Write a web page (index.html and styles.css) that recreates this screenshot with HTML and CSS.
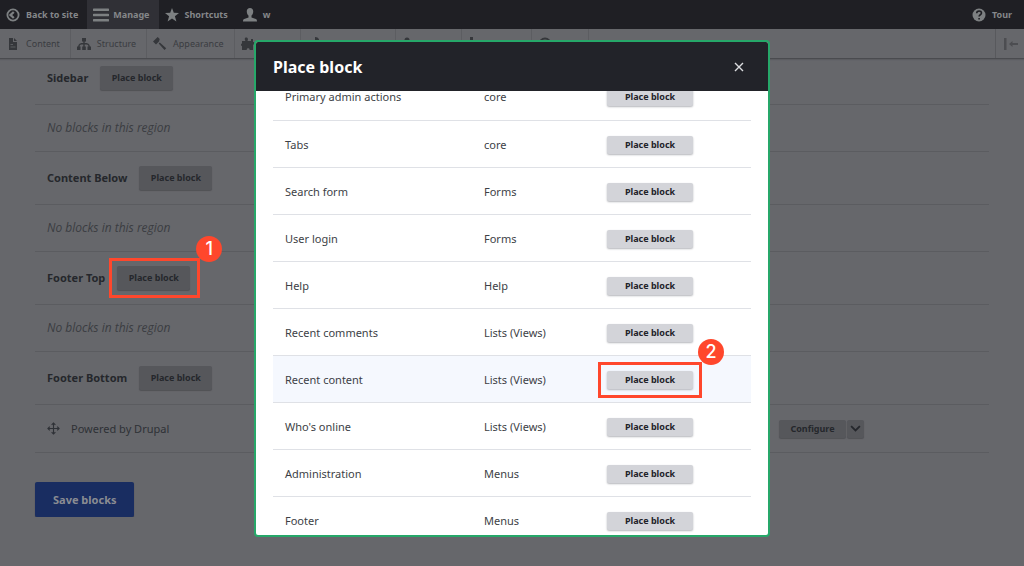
FILE: index.html
```html
<!DOCTYPE html>
<html lang="en">
<head>
<meta charset="utf-8">
<meta name="viewport" content="width=device-width, initial-scale=1">
<title>Place block</title>
<link rel="stylesheet" href="styles.css">
</head>
<body>
<nav class="bar" aria-label="Toolbar">
  <a class="bar-item" href="#"><svg viewBox="0 0 14 14"><circle cx="7" cy="7" r="5.6" fill="none" stroke="currentColor" stroke-width="1.8"/><path d="M2.8 7 7 3.2 8.6 4.7 6.2 7l2.4 2.3L7 10.8z" fill="currentColor"/></svg>Back to site</a>
  <a class="bar-item bar-item-active" href="#"><svg class="wide" viewBox="0 0 16 14"><path d="M1 1.7h14M1 7h14M1 12.3h14" stroke="currentColor" stroke-width="2.6" stroke-linecap="round"/></svg>Manage</a>
  <a class="bar-item" href="#"><svg viewBox="0 0 14 14"><path d="m7 0 1.8 4.8 5.2.2-4.100 3.200 1.500 5.200L7 10.500l-4.400 2.900 1.500-5.200L0 5l5.200-.2z" fill="currentColor"/></svg>Shortcuts</a>
  <a class="bar-item" href="#"><svg viewBox="0 0 14 14"><path d="M7 0c2.200 0 3.400 1.500 3.200 3.700-.1 1.700-.8 3-1.700 3.900v1.800l4.300 1.600c.8.300 1.200 1.200 1.200 2.500H0c0-1.300.4-2.200 1.200-2.500l4.300-1.600V7.600C4.600 6.700 3.900 5.400 3.800 3.700 3.600 1.500 4.800 0 7 0z" fill="currentColor"/></svg>w</a>
  <a class="bar-item bar-end" href="#"><svg viewBox="0 0 14 14"><circle cx="7" cy="7" r="6.500" fill="currentColor"/><path d="M4.700 5.300c0-3 4.800-3 4.800-.3C9.500 6.800 7.100 6.700 7.100 8.500M7.100 10v1.500" fill="none" stroke="#1f1f24" stroke-width="1.600"/></svg>Tour</a>
</nav>
<nav class="tray" aria-label="Administration">
  <a class="tab" href="#"><svg viewBox="0 0 14 14"><path d="M3 1h4v4h4v8H3z" fill="currentColor"/><path d="M8 1v3h3" fill="currentColor"/><path d="M4.500 7.500H7M4.500 10h5" stroke="#66676b" stroke-width=".8"/></svg>Content</a>
  <a class="tab" href="#"><svg viewBox="0 0 14 14"><path d="M5 1h4v3.500H5zM0 9.500h3.500V13H0zM5.200 9.500h3.600V13H5.200zM10.500 9.500H14V13h-3.500z" fill="currentColor"/><path d="M7 4v6M1.800 10c0-3 1.700-3.500 5.200-3.500s5.200.5 5.200 3.500" fill="none" stroke="currentColor" stroke-width="1.400"/></svg>Structure</a>
  <a class="tab" href="#"><svg viewBox="0 0 14 14"><path d="M0 4.500 4.700 0l2 2L6 4.500 3 7.500zM6.800 5.500l6.400 5.700-1.700 1.900-5.800-6.500z" fill="currentColor"/></svg>Appearance</a>
  <a class="tab" href="#"><svg viewBox="0 0 14 14"><path d="M1 4h3.500C3 1.500 4 .5 5.300.5S7.500 1.500 6.500 4H10V2h2v3c2.500-.5 2.500 3 0 2.500V13H8.500c.8-2.500-3.400-2.500-2.700 0H1V9c-1.300 0-1.300-2.500 0-2.500z" fill="currentColor"/></svg>Extend</a>
  <a class="tab" href="#"><svg viewBox="0 0 14 14"><path d="M8 0c4 0 5 3.500 3.500 6L5 13l-3-3 6-6z" fill="currentColor"/></svg>Configuration</a>
  <a class="tab" href="#"><svg viewBox="0 0 14 14"><circle cx="5" cy="3" r="2.500" fill="currentColor"/><path d="M1 13V8c0-4 8-4 8 0v5zM9 5h4v8H9z" fill="currentColor"/></svg>People</a>
  <a class="tab" href="#"><svg viewBox="0 0 14 14"><path d="M2 0h3v13H2zM6 4h3v9H6zM10 6h3v7h-3z" fill="currentColor"/></svg>Reports</a>
  <a class="tab" href="#"><svg viewBox="0 0 14 14"><circle cx="7" cy="7" r="5.500" fill="none" stroke="currentColor" stroke-width="2"/></svg>Help</a>
  <button class="tray-toggle" type="button" aria-label="Vertical orientation"><svg viewBox="0 0 16 14"><path d="M1 1h2.500v12H1zM6 7l3.500-3v2H15v2H9.500v2z" fill="currentColor"/></svg></button>
</nav>
<main class="page">
  <div class="row region"><h3>Sidebar</h3><button class="btn btn-dim" type="button">Place block</button></div>
  <div class="row empty">No blocks in this region</div>
  <div class="row region"><h3>Content Below</h3><button class="btn btn-dim" type="button">Place block</button></div>
  <div class="row empty">No blocks in this region</div>
  <div class="row region"><h3>Footer Top</h3><span class="marked"><button class="btn btn-dim" type="button">Place block</button><span class="frame"></span><span class="badge">1</span></span></div>
  <div class="row empty">No blocks in this region</div>
  <div class="row region"><h3>Footer Bottom</h3><button class="btn btn-dim" type="button">Place block</button></div>
  <div class="row block">
    <svg class="move" viewBox="0 0 14 14"><path d="M7 1v12M1 7h12M5 3l2-2 2 2M5 11l2 2 2-2M3 5 1 7l2 2M11 5l2 2-2 2" fill="none" stroke="currentColor" stroke-width="1.200"/></svg>
    <span class="block-name">Powered by Drupal</span>
    <span class="ops"><button class="btn btn-small" type="button">Configure</button><button class="btn btn-more" type="button" aria-label="More actions"><svg viewBox="0 0 10 6"><path d="m1 1 4 4 4-4" fill="none" stroke="currentColor" stroke-width="1.600"/></svg></button></span>
  </div>
  <button class="save" type="button">Save blocks</button>
</main>
<div class="overlay">
  <section class="dialog" role="dialog" aria-labelledby="dialog-title">
    <header class="dialog-head"><h2 id="dialog-title">Place block</h2><button class="close" type="button" aria-label="Close"><svg viewBox="0 0 10 10"><path d="m1 1 8 8M9 1 1 9" stroke="currentColor" stroke-width="1.400"/></svg></button></header>
    <div class="dialog-body">
      <table class="blocks">
        <tbody>
        <tr><td>Primary admin actions</td><td>core</td><td><button class="btn" type="button">Place block</button></td></tr>
        <tr><td>Tabs</td><td>core</td><td><button class="btn" type="button">Place block</button></td></tr>
        <tr><td>Search form</td><td>Forms</td><td><button class="btn" type="button">Place block</button></td></tr>
        <tr><td>User login</td><td>Forms</td><td><button class="btn" type="button">Place block</button></td></tr>
        <tr><td>Help</td><td>Help</td><td><button class="btn" type="button">Place block</button></td></tr>
        <tr><td>Recent comments</td><td>Lists (Views)</td><td><button class="btn" type="button">Place block</button></td></tr>
        <tr class="current"><td>Recent content</td><td>Lists (Views)</td><td><span class="marked"><button class="btn" type="button">Place block</button><span class="frame"></span><span class="badge">2</span></span></td></tr>
        <tr><td>Who's online</td><td>Lists (Views)</td><td><button class="btn" type="button">Place block</button></td></tr>
        <tr><td>Administration</td><td>Menus</td><td><button class="btn" type="button">Place block</button></td></tr>
        <tr><td>Footer</td><td>Menus</td><td><button class="btn" type="button">Place block</button></td></tr>
        </tbody>
      </table>
    </div>
  </section>
</div>
</body>
</html>
```
FILE: styles.css
```css
* { box-sizing: border-box; }
html, body { min-height: 100%; }
body {
  margin: 0;
  background: #66676b;
  color: #25272c;
  font: 11px/16px "Noto Sans", "Open Sans", sans-serif;
  overflow: hidden;
}
a { color: inherit; text-decoration: none; }
button { font: inherit; color: inherit; border: 0; padding: 0; cursor: pointer; }
h2, h3 { margin: 0; }
svg { display: block; flex: none; }

.bar {
  display: flex;
  height: 29px;
  background: #1f1f24;
  color: #85878a;
  font-size: 9px;
  font-weight: 700;
}
.bar-item { display: flex; align-items: center; gap: 6px; padding: 0 9px 0 6px; }
.bar-item svg { width: 14px; height: 14px; color: #7d8082; }
.bar-item .wide { width: 16px; }
.bar-item-active { background: #303036; gap: 4px; }
.bar-end { margin-left: auto; padding-right: 12px; }

.tray {
  display: flex;
  height: 30px;
  border-bottom: 1px solid #4a4b4f;
  box-shadow: 0 1px 1px #5b5c60;
  color: #3a3c41;
  font-size: 9px;
}
.tab {
  display: flex;
  align-items: center;
  gap: 6px;
  padding: 0 10px 0 6px;
  border-right: 1px solid #5c5d61;
}
.tab svg { width: 14px; height: 14px; color: #35373b; }
.tray-toggle {
  display: flex;
  align-items: center;
  margin-left: auto;
  padding: 0 5px 0 7px;
  background: none;
  border-left: 1px solid #58595d;
  color: #4c4d51;
}
.tray-toggle svg { width: 16px; height: 14px; }

.page { padding: 0 35px; }
.row {
  display: flex;
  align-items: center;
  padding: 0 12px;
  border-bottom: 1px solid #5b5c60;
}
.region { height: 53px; gap: 12px; }
.region:first-child { height: 46px; padding-bottom: 8px; }
.region h3 { font-size: 11px; line-height: 16px; }
.empty { height: 47px; color: #3b3d42; font: italic 12px/16px "Open Sans", "Noto Sans", sans-serif; }
.block { height: 48px; gap: 11px; color: #2e3136; }
.block-name { flex: 1; }
.move { width: 13px; height: 13px; }
.ops { display: flex; gap: 1px; width: 198px; }

.btn {
  min-width: 86px;
  height: 18px;
  padding: 0 12px;
  border-radius: 2px;
  background: #d3d4d9;
  color: #222329;
  box-shadow: 0 1px 2px #b4b5ba;
  font-size: 9px;
  line-height: 18px;
  font-weight: 700;
}
.btn-dim, .btn-small, .btn-more {
  background: #56575b;
  color: #25272c;
  box-shadow: 0 1px 1px #505155;
}
.btn-dim { min-width: 73px; height: 24px; padding: 0 8px; }
.btn-small { min-width: 67px; padding: 0 8px; }
.btn-more { min-width: 17px; padding: 0 3px; }
.btn-more svg { width: 11px; }

.save {
  margin-top: 29px;
  height: 35px;
  padding: 0 18px;
  border-radius: 2px;
  background: #192d61;
  color: #8a8c92;
  box-shadow: 0 1px 1px #3c404c;
  font-weight: 700;
}

.marked { position: relative; display: inline-flex; }
.frame {
  position: absolute;
  inset: -9px;
  border: 3px solid #ff472c;
  pointer-events: none;
}
.badge {
  position: absolute;
  top: -32px;
  right: -31px;
  width: 26px;
  height: 26px;
  border-radius: 50%;
  background: #ff472c;
  color: #fff;
  font: 500 18px/26px Inter, sans-serif;
  text-align: center;
}
.region .frame { inset: -8px -10px -8px -8px; }
.region .badge { top: -30px; right: -32px; }

.overlay {
  position: fixed;
  inset: 0;
  display: flex;
  justify-content: center;
  padding: 40px 16px 29px;
}
.dialog {
  display: flex;
  flex-direction: column;
  width: 516px;
  border: 2px solid #26a769;
  border-radius: 4px;
  overflow: hidden;
  background: #fff;
}
.dialog-head {
  display: flex;
  align-items: center;
  justify-content: space-between;
  flex: none;
  height: 49px;
  padding: 0 24px 0 17px;
  background: #222329;
  color: #fff;
}
.dialog-head h2 { font-size: 16px; line-height: 24px; }
.close { background: none; color: #dcdde0; }
.close svg { width: 10px; height: 10px; }
.dialog-body { flex: 1; overflow: hidden; padding: 0 17px; }
.blocks {
  width: 100%;
  margin-top: -18px;
  border-collapse: collapse;
  table-layout: fixed;
  color: #3d3f46;
}
.blocks td { height: 47px; padding: 2px 12px 0; border-bottom: 1px solid #dfe1e6; vertical-align: middle; }
.blocks .btn, .blocks .marked { vertical-align: middle; }
.blocks td:first-child { width: 199px; }
.blocks td:nth-child(2) { width: 123px; }
.current { background: #f5f8fe; }
```
